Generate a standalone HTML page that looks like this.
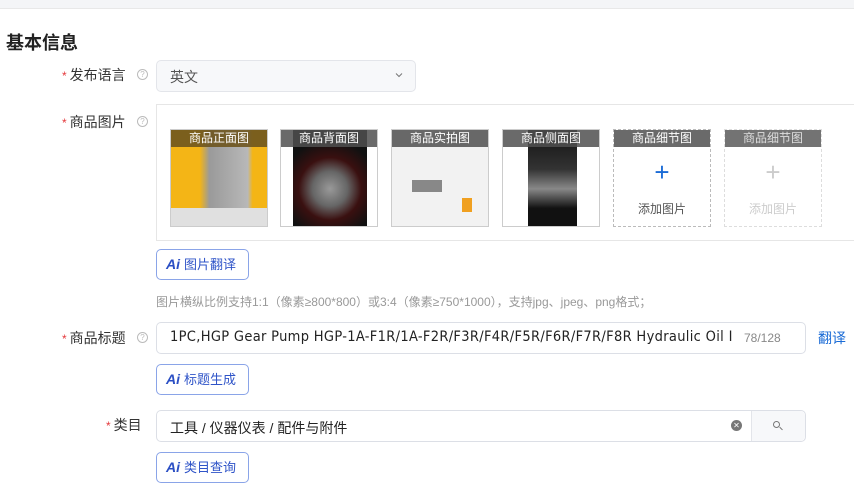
<!DOCTYPE html>
<html><head><meta charset="utf-8"><style>
*{box-sizing:border-box;margin:0;padding:0}
body{width:854px;height:501px;overflow:hidden;background:#fff;font-family:"Liberation Sans","Noto Sans CJK SC",sans-serif;color:#333;position:relative}
.a{position:absolute}
.top{left:0;top:0;width:854px;height:9px;background:#f4f5f7;border-bottom:1px solid #e8e8e8}
h1{position:absolute;left:6px;top:29px;font-size:18px;font-weight:bold;color:#222}
.lbl{position:absolute;font-size:14px;color:#333;text-align:right;white-space:nowrap}
.lbl b{color:#e4393c;font-weight:normal;font-size:12px;margin-right:3px}
.q{position:absolute;width:11px;height:11px;border:1px solid #bbb;border-radius:50%;font-size:8px;color:#bbb;text-align:center;line-height:9px}
.inp{position:absolute;border:1px solid #dcdfe6;border-radius:5px;background:#fff}
.ai{position:absolute;width:93px;height:31px;border:1px solid #8aa4e8;border-radius:5px;font-size:13px;color:#2f54c8;line-height:29px;padding-left:9px}
.ai i{font-style:italic;font-weight:bold;font-size:14px;margin-right:4px;color:#2b4fc4}
.img{position:absolute;top:129px;width:98px;height:98px;border:1px solid #ccc;overflow:hidden}
.img .h{position:absolute;left:0;top:0;width:100%;height:17px;background:rgba(80,80,80,.85);color:#fff;font-size:12px;text-align:center;line-height:17px;z-index:2}
.ph{border:1px dashed #bbb;text-align:center}
</style></head><body>
<div class="a top"></div>
<h1>基本信息</h1>

<div class="lbl" style="left:62px;top:65px"><b>*</b>发布语言</div>
<div class="q" style="left:137px;top:69px">?</div>
<div class="inp" style="left:156px;top:60px;width:260px;height:32px;background:#f7f8fa;border-color:#e3e5ea"></div>
<div class="a" style="left:170px;top:67px;font-size:14px;color:#555">英文</div>
<svg class="a" style="left:395px;top:72px" width="8" height="6"><path d="M1 1.5L4 4.5L7 1.5" stroke="#777" fill="none" stroke-width="1"/></svg>

<div class="lbl" style="left:62px;top:112px"><b>*</b>商品图片</div>
<div class="q" style="left:137px;top:116px">?</div>
<div class="a" style="left:156px;top:104px;width:700px;height:137px;border:1px solid #e6e6e6"></div>

<div class="img" style="left:170px;background:linear-gradient(90deg,#f4b516 0,#f4b516 30%,#9a9a9a 40%,#b8b8b8 80%,#f4b516 85%)"><div class="h" style="background:rgba(110,85,30,.9)">商品正面图</div><div class="a" style="left:0;top:78px;width:100%;height:20px;background:#e0e0e0"></div></div>
<div class="img" style="left:280px;background:#fff"><div class="h">商品背面图</div><div class="a" style="left:12px;top:0;width:74px;height:98px;background:radial-gradient(circle at 50% 60%,#999 0,#666 25%,#3a1010 45%,#111 70%)"></div></div>
<div class="img" style="left:391px;background:#f2f2f2"><div class="h">商品实拍图</div><div class="a" style="left:20px;top:50px;width:30px;height:12px;background:#888"></div><div class="a" style="left:70px;top:68px;width:10px;height:14px;background:#f0a020"></div></div>
<div class="img" style="left:502px;background:#fff"><div class="h">商品侧面图</div><div class="a" style="left:25px;top:0;width:49px;height:98px;background:linear-gradient(#111,#333 40%,#888 60%,#111 80%)"></div></div>
<div class="img ph" style="left:613px"><div class="h">商品细节图</div><div class="a" style="left:0;width:100%;top:27px;font-size:26px;color:#1a6bd6;line-height:30px">+</div><div class="a" style="left:0;width:100%;top:70px;font-size:12px;color:#555">添加图片</div></div>
<div class="img ph" style="left:724px;border-color:#ddd"><div class="h" style="background:rgba(90,90,90,.85);color:#ddd">商品细节图</div><div class="a" style="left:0;width:100%;top:27px;font-size:26px;color:#ccc;line-height:30px">+</div><div class="a" style="left:0;width:100%;top:70px;font-size:12px;color:#ccc">添加图片</div></div>

<div class="ai" style="left:156px;top:249px"><i>Ai</i>图片翻译</div>
<div class="a" style="left:156px;top:293px;font-size:12px;color:#999">图片横纵比例支持1:1（像素≥800*800）或3:4（像素≥750*1000），支持jpg、jpeg、png格式；</div>

<div class="lbl" style="left:62px;top:328px"><b>*</b>商品标题</div>
<div class="q" style="left:137px;top:332px">?</div>
<div class="inp" style="left:156px;top:322px;width:650px;height:32px"></div>
<div class="a" style="left:170px;top:329px;font-size:14.5px;color:#222;white-space:nowrap;font-family:'DejaVu Sans Condensed','Liberation Sans',sans-serif;letter-spacing:0.32px">1PC,HGP Gear Pump HGP-1A-F1R/1A-F2R/F3R/F4R/F5R/F6R/F7R/F8R Hydraulic Oil I</div>
<div class="a" style="left:744px;top:331px;font-size:12px;color:#888;background:#fff">78/128</div>
<div class="a" style="left:818px;top:328px;font-size:14px;color:#1a6bd6">翻译</div>

<div class="ai" style="left:156px;top:364px"><i>Ai</i>标题生成</div>

<div class="lbl" style="left:106px;top:415px"><b>*</b>类目</div>
<div class="inp" style="left:156px;top:410px;width:650px;height:32px"></div>
<div class="a" style="left:751px;top:411px;width:54px;height:30px;background:#f7f8fa;border-left:1px solid #e3e5ea;border-radius:0 5px 5px 0"></div>
<div class="a" style="left:170px;top:418px;font-size:14px;color:#222">工具 / 仪器仪表 / 配件与附件</div>
<div class="a" style="left:731px;top:420px;width:11px;height:11px;border-radius:50%;background:#777;color:#fff;font-size:8px;text-align:center;line-height:11px">✕</div>
<div class="a" style="left:773px;top:421px;width:7px;height:7px;border:1.2px solid #777;border-radius:50%"></div>
<div class="a" style="left:779px;top:428px;width:4px;height:1.2px;background:#777;transform:rotate(45deg)"></div>

<div class="ai" style="left:156px;top:452px"><i>Ai</i>类目查询</div>
</body></html>
